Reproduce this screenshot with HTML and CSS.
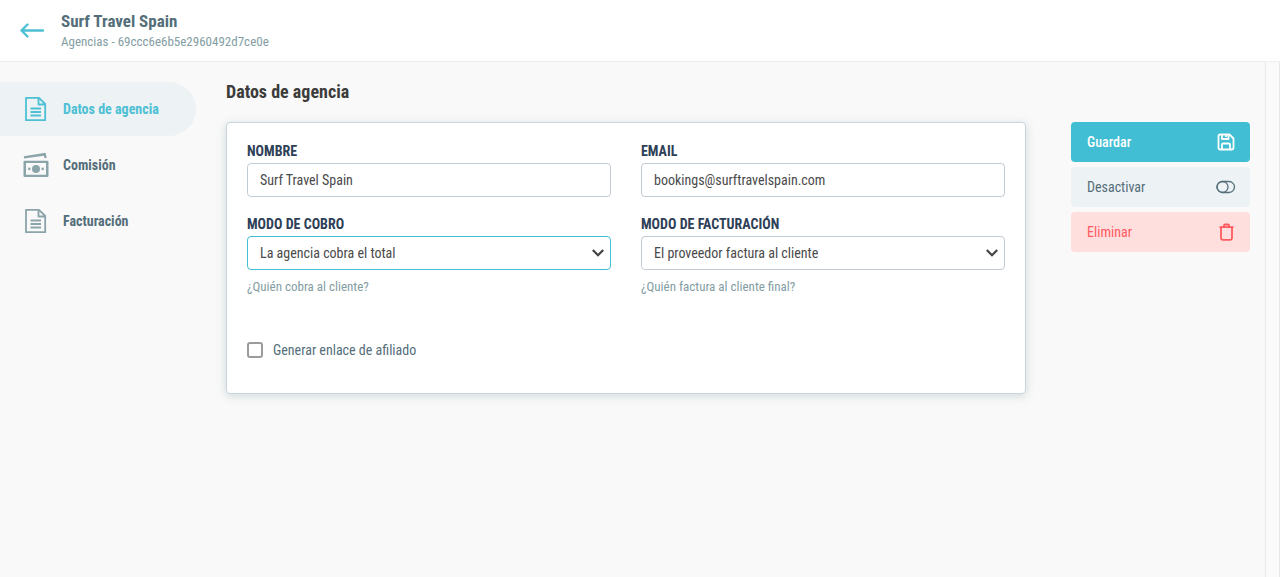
FILE: index.html
```
<!DOCTYPE html>
<html lang="es">
<head>
    <meta charset="UTF-8">
    <meta name="viewport" content="width=device-width, initial-scale=1.0">
    <title>Surf Travel Spain - Agencias</title>
    <link rel="stylesheet" href="styles.css">
</head>
<body>
    <header class="topbar">
        <a href="#" class="back" aria-label="Volver">
            <svg width="26" height="16" viewBox="0 0 26 16" fill="none" stroke="currentColor" stroke-width="2.4" stroke-linecap="round" stroke-linejoin="round">
                <path d="M24 7.500H2.500M8.500 1.500l-6 6 6 6"/>
            </svg>
        </a>
        <div>
            <h1>Surf Travel Spain</h1>
            <p class="subtitle">Agencias - 69ccc6e6b5e2960492d7ce0e</p>
        </div>
    </header>

    <div class="layout">
        <nav class="sidebar">
            <a href="#datos" class="active">
                <svg width="26" height="26" viewBox="0 0 26 26" fill="none" stroke="currentColor" stroke-width="1.800" stroke-linejoin="round">
                    <path d="M3 1.800h13l6.200 6.200v16.200H3zM15.500 1.800V8.500h6.700"/>
                    <path d="M7.500 12.500h10.500M7.500 16h10.500M7.500 19.500h10.500"/>
                </svg>
                Datos de agencia
            </a>
            <a href="#comision">
                <svg width="26" height="26" viewBox="0 0 26 26" fill="currentColor">
                    <path d="M.8 4.300L22.500.8l1.300 5.200h-2.300L20.900 3.800 1 6.500z"/>
                    <path fill-rule="evenodd" d="M1.800 8.800h22.400a1.300 1.300 0 0 1 1.300 1.300v13.600a1.300 1.300 0 0 1-1.300 1.300H1.800A1.300 1.300 0 0 1 .5 23.700V10.100A1.300 1.300 0 0 1 1.800 8.800zm1.200 2.300v11.600h20V11.100z"/>
                    <circle cx="13" cy="16.900" r="4"/>
                    <circle cx="6.300" cy="16.900" r="1.300"/>
                    <circle cx="19.700" cy="16.900" r="1.300"/>
                </svg>
                Comisión
            </a>
            <a href="#facturas">
                <svg width="26" height="26" viewBox="0 0 26 26" fill="none" stroke="currentColor" stroke-width="1.800" stroke-linejoin="round">
                    <path d="M3 1.800h13l6.200 6.200v16.200H3zM15.500 1.800V8.500h6.700"/>
                    <path d="M7.500 12.500h10.500M7.500 16h10.500M7.500 19.500h10.500"/>
                </svg>
                Facturación
            </a>
        </nav>

        <main class="content">
            <h2>Datos de agencia</h2>
            <form class="columns" id="agencyForm">
                <div class="card">
                    <div class="field">
                        <label for="nombre">NOMBRE</label>
                        <input type="text" id="nombre" value="Surf Travel Spain">
                    </div>
                    <div class="field">
                        <label for="email">EMAIL</label>
                        <input type="email" id="email" value="bookings@surftravelspain.com">
                    </div>
                    <div class="field">
                        <label for="cobro">MODO DE COBRO</label>
                        <div class="select">
                            <select id="cobro" class="selected">
                                <option>La agencia cobra el total</option>
                            </select>
                            <svg width="12" height="8" viewBox="0 0 12 8" fill="none" stroke="currentColor" stroke-width="2.200">
                                <path d="M.8 1L6 6.200 11.200 1"/>
                            </svg>
                        </div>
                        <p class="hint">¿Quién cobra al cliente?</p>
                    </div>
                    <div class="field">
                        <label for="facturacion">MODO DE FACTURACIÓN</label>
                        <div class="select">
                            <select id="facturacion">
                                <option>El proveedor factura al cliente</option>
                            </select>
                            <svg width="12" height="8" viewBox="0 0 12 8" fill="none" stroke="currentColor" stroke-width="2.200">
                                <path d="M.8 1L6 6.200 11.200 1"/>
                            </svg>
                        </div>
                        <p class="hint">¿Quién factura al cliente final?</p>
                    </div>
                    <div class="check">
                        <input type="checkbox" id="afiliado">
                        <label for="afiliado">Generar enlace de afiliado</label>
                    </div>
                </div>

                <div class="actions">
                    <button type="submit" class="save">
                        Guardar
                        <svg width="20" height="18" viewBox="0 0 20 18" fill="none" stroke="currentColor" stroke-width="1.800" stroke-linejoin="round">
                            <path d="M4 1.500h9.500l4 4V15a1.500 1.500 0 0 1-1.500 1.500H4A1.500 1.500 0 0 1 2.500 15V3A1.500 1.500 0 0 1 4 1.500z"/>
                            <path d="M6 1.500V6h6.500V1.500M6 16.500v-5a1 1 0 0 1 1-1h6a1 1 0 0 1 1 1v5"/>
                            <path d="M10 2v2"/>
                        </svg>
                    </button>
                    <button type="button" class="disable">
                        Desactivar
                        <svg width="20" height="18" viewBox="0 0 20 18" fill="none" stroke="currentColor" stroke-width="1.300">
                            <rect x="1" y="3.500" width="17.500" height="11" rx="5.500"/>
                            <circle cx="6.500" cy="9" r="5.500"/>
                        </svg>
                    </button>
                    <button type="button" class="delete">
                        Eliminar
                        <svg width="20" height="18" viewBox="0 0 20 18" fill="none" stroke="currentColor" stroke-width="1.800" stroke-linejoin="round">
                            <path d="M3.500 4.200h14M8 4V2.500A1 1 0 0 1 9 1.500h3a1 1 0 0 1 1 1V4"/>
                            <path d="M5 4.200V15a1.800 1.800 0 0 0 1.800 1.800h7.400A1.800 1.800 0 0 0 16 15V4.200"/>
                        </svg>
                    </button>
                </div>
            </form>
        </main>
        <div class="scroll-track"></div>
    </div>
</body>
</html>
```

FILE: styles.css
```
* {
    box-sizing: border-box;
}

body {
    font-family: 'Roboto Condensed', 'Liberation Sans Narrow', Roboto, sans-serif;
    font-size: 14px;
    line-height: 20px;
    margin: 0;
    min-height: 100vh;
    display: flex;
    flex-direction: column;
    background-color: #f9f9f9;
    color: #546e7a;
}

h1, h2, p {
    margin: 0;
}

a {
    color: inherit;
    text-decoration: none;
}

svg {
    display: block;
    flex: none;
}

.topbar {
    display: flex;
    align-items: center;
    gap: 16px;
    height: 62px;
    padding: 0 19px;
    background-color: #fff;
    border-bottom: 1px solid #eee;
}

.back {
    color: #4dc0d4;
}

h1 {
    font-size: 17px;
    line-height: 22px;
}

.subtitle {
    font-size: 13px;
    color: #839da3;
}

.layout {
    flex: 1;
    display: flex;
}

.sidebar {
    width: 196px;
    flex: none;
    display: flex;
    flex-direction: column;
    gap: 2px;
    padding-top: 20px;
}

.sidebar a {
    display: flex;
    align-items: center;
    gap: 14px;
    height: 54px;
    padding-left: 23px;
    font-weight: bold;
    border-radius: 0 27px 27px 0;
}

.sidebar svg {
    color: #8ba4a9;
}

.sidebar .active {
    background-color: #edf2f5;
}

.sidebar .active,
.sidebar .active svg {
    color: #4dc0d4;
}

.content {
    flex: 1;
    padding: 20px 15px 30px 30px;
}

h2 {
    font-size: 18px;
    line-height: 20px;
    margin-bottom: 20px;
    color: #3c3c3b;
}

.columns {
    display: flex;
    align-items: flex-start;
    gap: 45px;
}

.card {
    flex: 1;
    display: grid;
    grid-template-columns: 1fr 1fr;
    gap: 17px 30px;
    padding: 18px 20px 33px;
    background-color: #fff;
    border: 1px solid #c9d5dd;
    border-radius: 4px;
    box-shadow: 0 2px 10px rgba(84, 122, 122, 0.25);
}

.field label {
    display: block;
    margin-bottom: 2px;
    font-weight: bold;
    color: #2e4057;
}

.field input,
.field select {
    display: block;
    width: 100%;
    height: 34px;
    padding: 0 12px;
    font: inherit;
    color: #4a4a4a;
    background-color: #fff;
    border: 1px solid #c2cbd5;
    border-radius: 4px;
    appearance: none;
    outline: none;
}

.field input:focus,
.field select:focus,
.field .selected {
    border-color: #41bed3;
}

.select {
    position: relative;
}

.select svg {
    position: absolute;
    right: 7px;
    top: 13px;
    color: #444;
    pointer-events: none;
}

.hint {
    margin-top: 7px;
    font-size: 13px;
    color: #839da3;
}

.check {
    grid-column: 1 / -1;
    display: flex;
    align-items: center;
    gap: 10px;
    margin-top: 26px;
}

.check input {
    width: 16px;
    height: 16px;
    margin: 0;
    appearance: none;
    background-color: #fff;
    border: 2px solid #9b9b9b;
    border-radius: 3px;
}

.check input:checked {
    background-color: #41bed3;
    border-color: #41bed3;
}

.actions {
    width: 179px;
    flex: none;
    display: flex;
    flex-direction: column;
    gap: 5px;
}

.actions button {
    display: flex;
    align-items: center;
    justify-content: space-between;
    height: 40px;
    padding: 0 14px 0 16px;
    font: inherit;
    border: 0;
    border-radius: 4px;
    cursor: pointer;
}

.actions .save {
    background-color: #41bed3;
    color: #fff;
    font-weight: 500;
}

.actions .disable {
    background-color: #edf2f5;
    color: #546e7a;
}

.actions .delete {
    background-color: #ffdede;
    color: #ff5a5f;
}

.scroll-track {
    width: 15px;
    flex: none;
    border: 1px solid #e8e8e8;
    border-width: 0 1px;
    background-color: #fafafa;
}
```
